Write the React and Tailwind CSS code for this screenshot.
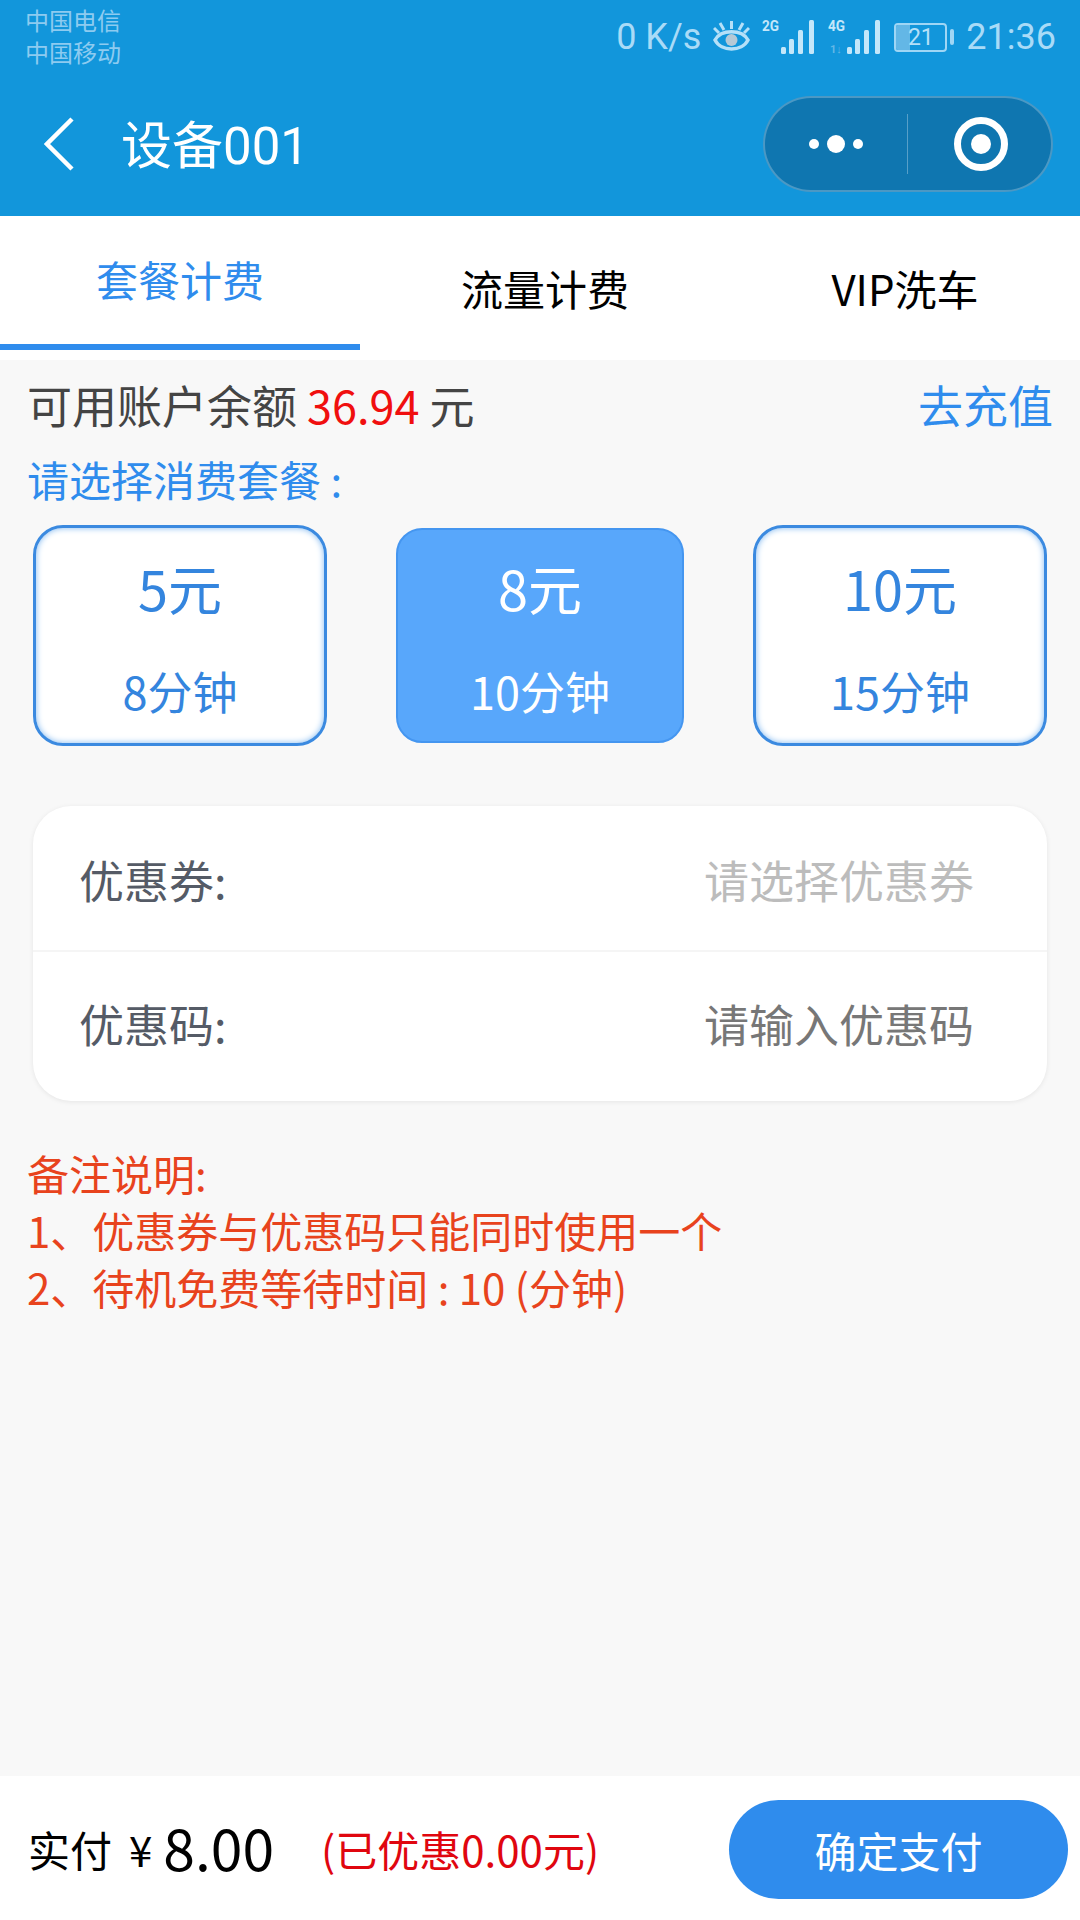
const cjk = "font-['Noto_Sans_CJK_SC','Noto_Sans',sans-serif]";

const plans = [
  { price: '5元', time: '8分钟' },
  { price: '8元', time: '10分钟', active: true },
  { price: '10元', time: '15分钟' },
];

const EyeIcon = () => (
  <svg width="37" height="34" viewBox="0 0 37 34" fill="none" stroke="#b5e0f8" strokeWidth="3.5">
    <path d="M2 20 C8 9 29 9 35 20 C29 32 8 32 2 20 Z" />
    <circle cx="18.5" cy="20" r="6" fill="#b6c9d6" stroke="none" />
    <path d="M18.5 1 V9 M7 3 L11 10 M30 3 L26 10 M1 8 L6 13 M36 8 L31 13" strokeWidth="3" />
  </svg>
);

const Signal = ({ label, sub }) => (
  <svg width="54" height="36" viewBox="0 0 54 36">
    <text x="0" y="12" fontSize="14" fontWeight="700" fontFamily="Roboto, sans-serif" fill="#c4e7fa" textLength="17" lengthAdjust="spacingAndGlyphs">{label}</text>
    {sub && <text x="2" y="34" fontSize="11" fontWeight="700" fontFamily="Roboto, sans-serif" fill="#63b7e6">1↓</text>}
    <rect x="19" y="28" width="5" height="7" rx="1.5" fill="#c4e7fa" />
    <rect x="27" y="20" width="5" height="15" rx="1.5" fill="#c4e7fa" />
    <rect x="36" y="11" width="5" height="24" rx="1.5" fill="#c4e7fa" />
    <rect x="47" y="1" width="5" height="34" rx="1.5" fill="#c4e7fa" />
  </svg>
);

const Battery = () => (
  <div className="flex items-center gap-[3px]">
    <div className="relative w-[53px] h-[29px] rounded-[4px] border-2 border-[#9fd6f5] flex items-center justify-center overflow-hidden">
      <div className="absolute left-0 top-0 bottom-0 w-[14px] bg-[#63b7e6]" />
      <span className="relative text-[23px] leading-none text-[#b5e0f8] font-['Roboto',sans-serif]">21</span>
    </div>
    <div className="w-[4px] h-[16px] rounded-[2px] bg-[#9fd6f5]" />
  </div>
);

const StatusBar = () => (
  <div className="h-[72px] flex justify-between pl-[25px] pr-[24px]">
    <div className={`flex flex-col pt-[4px] text-[24px] leading-[32px] text-[#8dcbf0] ${cjk}`}>
      <span>中国电信</span>
      <span>中国移动</span>
    </div>
    <div className="flex items-center gap-[12px] h-[74px] text-[36px] text-[#a9dbf7] font-['Roboto',sans-serif]">
      <span>0 K/s</span>
      <EyeIcon />
      <Signal label="2G" />
      <Signal label="4G" sub />
      <Battery />
      <span>21:36</span>
    </div>
  </div>
);

const NavBar = () => (
  <div className="h-[144px] flex items-center justify-between pl-[44px] pr-[27px]">
    <div className="flex items-center gap-[47px]">
      <svg width="30" height="54" viewBox="0 0 30 54" fill="none" stroke="#fff" strokeWidth="4.5">
        <path d="M28 2 L3 27 L28 52" />
      </svg>
      <span className="pt-[4px] text-[51px] leading-none text-white font-['Roboto','Noto_Sans_CJK_SC',sans-serif]">设备001</span>
    </div>
    <div className="w-[290px] h-[96px] rounded-full bg-[#0f76b0] border-2 border-white/25 flex items-center">
      <div className="w-[142px] flex items-center justify-center gap-[8px]">
        <div className="w-[10px] h-[10px] rounded-full bg-white" />
        <div className="w-[18px] h-[18px] rounded-full bg-white" />
        <div className="w-[10px] h-[10px] rounded-full bg-white" />
      </div>
      <div className="w-[1px] h-[60px] bg-white/30" />
      <div className="flex-1 flex items-center justify-center pl-[3px]">
        <div className="w-[54px] h-[54px] rounded-full border-[7px] border-white flex items-center justify-center">
          <div className="w-[20px] h-[20px] rounded-full bg-white" />
        </div>
      </div>
    </div>
  </div>
);

const Tabs = () => (
  <div className={`h-[144px] bg-white flex ${cjk}`}>
    <div className="w-[360px] h-[134px] border-b-[6px] border-[#2f8ced] flex items-center justify-center pb-[4px]">
      <span className="text-[42px] text-[#2f8ced]">套餐计费</span>
    </div>
    <div className="w-[370px] h-[144px] pb-[2px] flex items-center justify-center">
      <span className="text-[42px] text-black">流量计费</span>
    </div>
    <div className="w-[350px] h-[144px] pb-[2px] flex items-center justify-center">
      <span className="text-[42px] text-black">VIP洗车</span>
    </div>
  </div>
);

const PlanCard = ({ plan }) => (
  <div
    className={
      plan.active
        ? 'w-[288px] h-[215px] rounded-[26px] bg-[#58a7fb] border-2 border-[#4596f0] text-white flex flex-col items-center'
        : 'w-[294px] h-[221px] rounded-[30px] bg-white border-[3px] border-[#3b8ae0] text-[#3485de] flex flex-col items-center shadow-[inset_0_0_6px_#7fb8f0]'
    }
  >
    <span className={plan.active ? 'mt-[22px] text-[54px] leading-[72px]' : 'mt-[24px] text-[54px] leading-[72px]'}>{plan.price}</span>
    <span className="mt-[37px] text-[45px] leading-[60px]">{plan.time}</span>
  </div>
);

const Coupons = () => (
  <div className="mt-[60px] mx-[33px] h-[295px] rounded-[38px] bg-white shadow-[0_1px_5px_rgba(0,0,0,0.08)] flex flex-col text-[45px]">
    <div className="h-[146px] border-b-2 border-[#f5f5f5] flex items-center justify-between pl-[46px] pr-[73px]">
      <span className="pt-[3px] text-[#555b66]">优惠券:</span>
      <span className="pt-[3px] text-[#bcbcbc]">请选择优惠券</span>
    </div>
    <div className="flex-1 flex items-center justify-between pl-[46px] pr-[73px]">
      <span className="pb-[5px] text-[#555b66]">优惠码:</span>
      <span className="pb-[5px] text-[#777777]">请输入优惠码</span>
    </div>
  </div>
);

export default function App() {
  return (
    <div className={`w-[1080px] h-[1920px] flex flex-col bg-[#f8f8f8] ${cjk}`}>
      <div className="bg-[#1296db]">
        <StatusBar />
        <NavBar />
      </div>
      <Tabs />

      <div className="flex-1">
        <div className="h-[90px] flex items-center justify-between pl-[27px] pr-[27px] text-[45px] text-[#444444]">
          <span>
            可用账户余额 <span className="text-[#f00f0f]">36.94</span> 元
          </span>
          <span className="text-[#2f8ced]">去充值</span>
        </div>
        <div className="pl-[27px] h-[60px] pb-[4px] flex items-center text-[42px] text-[#2f8ced]">请选择消费套餐 :</div>
        <div className="mt-[15px] px-[33px] flex items-center justify-between">
          {plans.map((plan) => (
            <PlanCard key={plan.price} plan={plan} />
          ))}
        </div>
        <Coupons />
        <div className="mt-[43px] pl-[27px] text-[42px] leading-[57px] text-[#e8431d]">
          <p>备注说明:</p>
          <p>1、优惠券与优惠码只能同时使用一个</p>
          <p>2、待机免费等待时间 : 10 (分钟)</p>
        </div>
      </div>

      <div className="h-[144px] bg-white flex items-center pl-[28px] pr-[12px]">
        <span className="text-[42px] text-black">实付</span>
        <span className="ml-[17px] text-[42px] text-black">¥</span>
        <span className="ml-[11px] pb-[3px] text-[57px] leading-none text-black">8.00</span>
        <span className="ml-[47px] text-[42px] text-[#e0060f]">(已优惠0.00元)</span>
        <div className="ml-auto mt-[2px] w-[339px] h-[99px] rounded-full bg-[#2f8ced] flex items-center justify-center">
          <span className="text-[42px] text-white">确定支付</span>
        </div>
      </div>
    </div>
  );
}
